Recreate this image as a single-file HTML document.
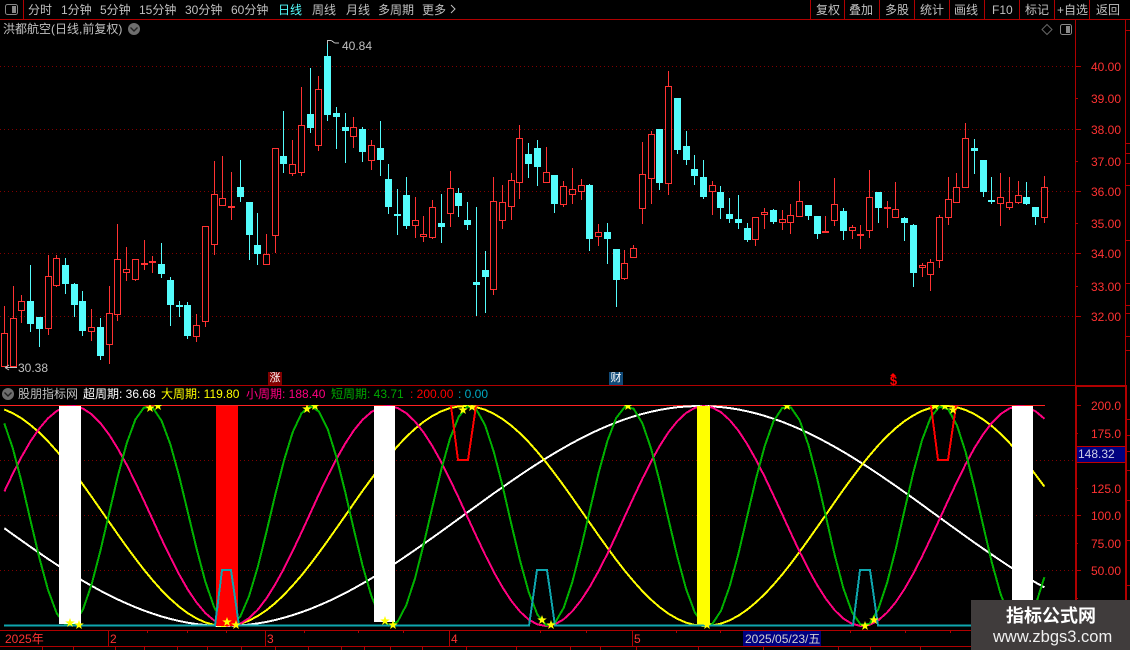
<!DOCTYPE html>
<html lang="zh">
<head>
<meta charset="utf-8">
<title>洪都航空 日线</title>
<style>
html,body{margin:0;padding:0;background:#000;}
#p{position:relative;width:1130px;height:650px;overflow:hidden;background:#000;font-family:"Liberation Sans","Noto Sans CJK SC",sans-serif;font-size:12px;color:#c0c0c0;}
#p svg{position:absolute;left:0;top:0;}
.t{position:absolute;white-space:nowrap;line-height:14px;height:14px;}
.r{color:#ff3232;}
.wm{position:absolute;left:971px;top:600px;width:159px;height:50px;background:#403c3c;}
.mk{position:absolute;text-align:center;color:#fff;font-size:11px;line-height:13px;height:13px;overflow:hidden;}
</style>
</head>
<body>
<div id="p">
<svg id="s" width="1130" height="650" viewBox="0 0 1130 650" xmlns="http://www.w3.org/2000/svg">
<defs><clipPath id="pane"><rect x="0" y="405" width="1075" height="225"/></clipPath></defs>
<g stroke="#b00000" stroke-width="1" shape-rendering="crispEdges" fill="none">
<path d="M0 19.5H1130M0 385.5H1075M0 630.5H1075M0 646.5H1075"/>
<path d="M23.5 0V19M810.5 0V19M844.5 0V19M879.5 0V19M914.5 0V19M949.5 0V19M984.5 0V19M1019.5 0V19M1054.5 0V19M1089.5 0V19"/>
<path d="M1075.5 19V386M1125.5 19V386"/>
<path d="M1075 66.5H1081M1075 98.5H1078M1075 129.5H1081M1075 161.5H1078M1075 191.5H1081M1075 223.5H1078M1075 253.5H1081M1075 286.5H1078M1075 316.5H1081"/>
<path d="M1075 405.5H1081M1075 433.5H1078M1075 488.5H1078M1075 515.5H1081M1075 543.5H1078M1075 570.5H1081M1075 598.5H1078"/>
<path d="M1126 30.5H1130M1126 143.5H1130M1126 153.5H1130M1126 163.5H1130M1126 185.5H1130M1126 240.5H1130M1126 283.5H1130M1126 305.5H1130M1126 313.5H1130M1126 336.5H1130M1126 350.5H1130M1126 419.5H1130M1126 435.5H1130M1126 451.5H1130M1126 470.5H1130M1126 500.5H1130M1126 540.5H1130M1126 585.5H1130"/>
<path d="M108.5 630V646M265.5 630V646M449.5 630V646M632.5 630V646"/>
<path d="M147.5 630V633M187.5 630V633M226.5 630V633M304.5 630V633M358.5 630V633M403.5 630V633M540.5 630V633M586.5 630V633M676.5 630V633M720.5 630V633M770.5 630V633M850.5 630V633M905.5 630V633M950.5 630V633"/>
<path d="M42.5 646V650M73.5 646V650M115.5 646V650M144.5 646V650M177.5 646V650M207.5 646V650M241.5 646V650M275.5 646V650M308.5 646V650M341.5 646V650M364.5 646V650M390.5 646V650M422.5 646V650M466.5 646V650M516.5 646V650M570.5 646V650M600.5 646V650M636.5 646V650M698.5 646V650M763.5 646V650M838.5 646V650M870.5 646V650M920.5 646V650"/>
</g>
<path d="M1075 385V647M1076 385V647M1125 385V600M1126 385V600" stroke="#b00000" stroke-width="1" shape-rendering="crispEdges" transform="translate(.5 0)"/>
<path d="M1075 386H1127" stroke="#b00000" stroke-width="2" shape-rendering="crispEdges"/>
<g stroke="#800000" stroke-width="1" stroke-dasharray="1 3" shape-rendering="crispEdges">
<path d="M0 66.5H1075M0 129.5H1075M0 191.5H1075M0 253.5H1075M0 316.5H1075M0 460.5H1075M0 515.5H1075M0 570.5H1075"/>
</g>
<g id="candles" shape-rendering="crispEdges"></g>
<path d="M0 405.5H1045" stroke="#ff2020" stroke-width="1" shape-rendering="crispEdges"/>
<g id="curves" fill="none" stroke-width="2" shape-rendering="crispEdges" clip-path="url(#pane)"></g>
<g shape-rendering="crispEdges">
<rect x="59" y="406" width="22" height="218" fill="#fff"/>
<rect x="216" y="406" width="22" height="220" fill="#f00"/>
<rect x="374" y="406" width="21" height="216" fill="#fff"/>
<rect x="697" y="406" width="13" height="219" fill="#ff0"/>
<rect x="1012" y="406" width="21" height="218" fill="#fff"/>
</g>
<g fill="none" stroke-width="2" shape-rendering="crispEdges">
<path d="M4 625.7H215L222 570H231L239 625.7H529L537 570H547L555 625.7H853L860 570H870L878 625.7H1045" stroke="#0ea6ae"/>
<path d="M451 406L458 460H468L476 406M931 406L938 460H948L956 406" stroke="#f00"/>
</g>
<g id="stars" fill="#ff0" clip-path="url(#pane)"></g>
<g fill="none" stroke="#c0c0c0" stroke-width="1">
<path d="M327.5 40V44M327.5 40.5H331L335 43H339" shape-rendering="crispEdges"/>
<path d="M5 367.5H17M5 367.5L9 365M5 367.5L9 370"/>
</g>
<g>
<circle cx="134" cy="29" r="6" fill="#6e6e6e"/>
<path d="M130.5 27.5L134 31L137.5 27.5" fill="none" stroke="#222" stroke-width="1.4"/>
<circle cx="8" cy="394" r="6" fill="#6e6e6e"/>
<path d="M4.5 392.5L8 396L11.5 392.5" fill="none" stroke="#222" stroke-width="1.4"/>
<path d="M1047 24.5L1052 29.5L1047 34.5L1042 29.5Z" fill="none" stroke="#666" stroke-width="1"/>
<rect x="1060.5" y="24.5" width="11" height="10" rx="2" fill="none" stroke="#888"/>
<rect x="1066" y="26" width="4" height="7" fill="#888"/>
<rect x="5.5" y="4.5" width="12" height="10" rx="2" fill="none" stroke="#888"/>
<rect x="12" y="6" width="4" height="7" fill="#888"/>
<path d="M451 5L455 9L451 13" fill="none" stroke="#c0c0c0" stroke-width="1"/>
<path d="M893 373L896 376H890Z" fill="#f00"/>
</g>
</svg>

<span class="t" style="left:28px;top:3px">分时</span>
<span class="t" style="left:61px;top:3px">1分钟</span>
<span class="t" style="left:100px;top:3px">5分钟</span>
<span class="t" style="left:139px;top:3px">15分钟</span>
<span class="t" style="left:185px;top:3px">30分钟</span>
<span class="t" style="left:231px;top:3px">60分钟</span>
<span class="t" style="left:278px;top:3px;color:#54fcfc">日线</span>
<span class="t" style="left:312px;top:3px">周线</span>
<span class="t" style="left:346px;top:3px">月线</span>
<span class="t" style="left:378px;top:3px">多周期</span>
<span class="t" style="left:422px;top:3px">更多</span>

<span class="t" style="left:816px;top:3px">复权</span>
<span class="t" style="left:849px;top:3px">叠加</span>
<span class="t" style="left:885px;top:3px">多股</span>
<span class="t" style="left:920px;top:3px">统计</span>
<span class="t" style="left:954px;top:3px">画线</span>
<span class="t" style="left:992px;top:3px">F10</span>
<span class="t" style="left:1025px;top:3px">标记</span>
<span class="t" style="left:1057px;top:3px">+自选</span>
<span class="t" style="left:1096px;top:3px">返回</span>

<span class="t" style="left:3px;top:22px">洪都航空(日线,前复权)</span>
<span class="t" style="left:342px;top:39px">40.84</span>
<span class="t" style="left:18px;top:361px">30.38</span>

<span class="t r" style="left:1091px;top:60px">40.00</span>
<span class="t r" style="left:1091px;top:92px">39.00</span>
<span class="t r" style="left:1091px;top:123px">38.00</span>
<span class="t r" style="left:1091px;top:155px">37.00</span>
<span class="t r" style="left:1091px;top:185px">36.00</span>
<span class="t r" style="left:1091px;top:217px">35.00</span>
<span class="t r" style="left:1091px;top:247px">34.00</span>
<span class="t r" style="left:1091px;top:280px">33.00</span>
<span class="t r" style="left:1091px;top:310px">32.00</span>

<span class="mk" style="left:268px;top:372px;width:14px;background:#800000">涨</span>
<span class="mk" style="left:609px;top:372px;width:14px;background:#104a78">财</span>
<span class="mk" style="left:887px;top:374px;width:13px;color:#f00;font-weight:bold;font-size:13px">$</span>

<span class="t" style="left:18px;top:387px">股朋指标网</span>
<span class="t" style="left:83px;top:387px;color:#fff">超周期: 36.68</span>
<span class="t" style="left:161px;top:387px;color:#ff0">大周期: 119.80</span>
<span class="t" style="left:246px;top:387px;color:#ff0080">小周期: 188.40</span>
<span class="t" style="left:331px;top:387px;color:#00a800">短周期: 43.71</span>
<span class="t" style="left:410px;top:387px;color:#f00">: 200.00</span>
<span class="t" style="left:458px;top:387px;color:#00a8c0">: 0.00</span>

<span class="t r" style="left:1091px;top:399px">200.0</span>
<span class="t r" style="left:1091px;top:427px">175.0</span>
<span class="t r" style="left:1091px;top:482px">125.0</span>
<span class="t r" style="left:1091px;top:509px">100.0</span>
<span class="t r" style="left:1091px;top:537px">75.00</span>
<span class="t r" style="left:1091px;top:564px">50.00</span>
<div style="position:absolute;left:1077px;top:446px;width:48px;height:15px;background:#000080;border-top:1px solid #c00000;border-bottom:1px solid #c00000"></div>
<span class="t" style="left:1078px;top:447px;color:#d0d0e8">148.32</span>

<span class="t r" style="left:5px;top:632px">2025年</span>
<span class="t r" style="left:110px;top:632px">2</span>
<span class="t r" style="left:267px;top:632px">3</span>
<span class="t r" style="left:451px;top:632px">4</span>
<span class="t r" style="left:634px;top:632px">5</span>
<div style="position:absolute;left:743px;top:631px;width:78px;height:15px;background:#000080"></div>
<span class="t" style="left:745px;top:632px;color:#d0d0d0">2025/05/23/五</span>

<div class="wm"></div>
<span class="t" style="left:1006px;top:606px;font-size:18px;line-height:20px;height:20px;font-weight:bold;color:#fff;font-family:'Liberation Sans','Noto Sans CJK SC',sans-serif">指标公式网</span>
<span class="t" style="left:993px;top:628px;font-size:16.5px;line-height:18px;height:18px;color:#f0f0f0">www.zbgs3.com</span>
</div>

<script>
var D=[[0,306,333,367,367],[0,286,318,367,367],[0,295,301,311,323],[1,265,301,324,332],[1,317,317,329,347],[0,255,276,329,335],[0,255,258,286,287],[1,258,265,284,294],[1,283,284,305,317],[1,291,301,331,336],[0,309,327,332,341],[1,318,327,356,360],[0,286,313,345,364],[0,224,259,315,321],[0,247,269,273,281],[0,259,259,280,281],[0,240,263,265,270],[0,256,261,263,273],[1,243,264,274,278],[1,277,280,305,326],[1,301,305,306,317],[1,302,305,336,339],[0,314,325,337,342],[0,226,226,322,327],[0,161,194,245,255],[0,156,198,206,206],[0,172,206,208,220],[1,160,187,197,202],[1,202,202,235,260],[1,213,245,254,265],[0,234,254,265,265],[0,148,148,236,253],[1,111,156,164,173],[0,140,164,174,176],[0,87,125,173,176],[1,68,114,128,133],[0,76,89,146,151],[1,42,56,115,121],[1,107,113,117,149],[1,113,127,131,163],[0,117,127,137,148],[1,127,129,152,162],[0,140,145,161,170],[1,121,148,160,176],[1,164,179,207,214],[1,189,214,216,235],[1,177,195,226,229],[0,197,220,226,238],[0,216,234,237,242],[0,200,207,238,239],[1,194,223,227,243],[0,171,188,214,227],[1,188,193,206,217],[1,202,220,225,230],[1,207,282,285,316],[1,251,270,277,313],[0,177,201,290,295],[0,185,202,221,229],[0,173,180,207,220],[0,125,138,183,199],[1,143,154,164,178],[1,140,148,167,186],[0,147,172,183,183],[1,175,175,204,213],[0,181,186,205,207],[0,168,189,195,204],[0,179,185,192,200],[1,184,185,239,251],[0,224,232,237,246],[1,223,232,239,264],[1,249,249,280,307],[0,250,263,279,280],[0,245,248,258,258],[0,142,174,209,224],[0,131,134,179,204],[1,129,129,183,190],[0,71,86,184,195],[1,98,98,150,154],[1,131,146,160,165],[1,155,169,176,185],[1,160,177,197,199],[0,181,185,192,215],[1,186,192,208,219],[1,198,214,219,223],[1,195,219,223,229],[1,223,228,240,242],[0,217,217,240,246],[0,208,212,215,229],[1,209,210,222,224],[0,210,219,223,230],[0,204,215,223,234],[0,181,201,217,217],[1,205,205,216,220],[1,216,216,234,239],[0,216,231,233,233],[0,178,204,221,226],[1,208,211,231,240],[0,225,227,231,239],[0,225,234,236,249],[0,170,197,231,238],[1,192,192,208,223],[0,201,207,209,228],[0,182,209,218,218],[1,217,218,223,241],[1,224,225,273,287],[0,263,265,268,277],[0,259,262,275,291],[0,215,217,261,268],[0,177,199,218,225],[0,173,187,203,203],[0,123,138,188,188],[1,139,148,151,174],[1,160,160,192,197],[1,177,200,201,204],[0,173,197,204,226],[0,177,202,208,210],[0,181,195,203,204],[1,182,197,204,205],[1,207,207,217,225],[0,176,187,218,223]];
var NS="http://www.w3.org/2000/svg";
function el(n,a,par){var e=document.createElementNS(NS,n);for(var k in a)e.setAttribute(k,a[k]);par.appendChild(e);return e;}
var C=document.getElementById("candles");
var RED="#ff3232",CY="#54fcfc";
D.forEach(function(d,i){
  var cx=Math.floor(4.3+8.74*i),col=d[0]?CY:RED;
  el("rect",{x:cx,y:d[1],width:1,height:Math.max(d[4]-d[1],1),fill:col},C);
  if(d[0]||d[3]-d[2]<=2){
    el("rect",{x:cx-3,y:d[2],width:7,height:Math.max(d[3]-d[2],2),fill:col},C);
  }else{
    el("rect",{x:cx-2.5,y:d[2]+.5,width:6,height:d[3]-d[2]-1,fill:"#000",stroke:col,"stroke-width":1},C);
  }
});
var G=document.getElementById("curves");
function curve(col,f){
  var pts=[];
  for(var i=0;i<120;i++){
    var x=4.3+8.74*i;
    var y=516-110*Math.cos(f(x));
    pts.push(x.toFixed(1)+","+y.toFixed(1));
  }
  el("polyline",{points:pts.join(" "),stroke:col},G);
}
function lin(x0,hp){return function(x){return Math.PI*(x-x0)/hp;};}
var GP=[-10,148,311,470,628,787,942,1098];
function greenPhase(x){
  var k=0;
  while(k<GP.length-2&&x>=GP[k+1])k++;
  return 2*Math.PI*(k+(x-GP[k])/(GP[k+1]-GP[k]));
}
curve("#ffffff",lin(700,475));
curve("#ffff00",lin(465,240));
curve("#ff0080",lin(72,158));
curve("#00b000",greenPhase);
var S=document.getElementById("stars");
[[150,408],[158,406],[307,409],[315,406],[463,410],[472,407],[628,406],[787,406],[935,406],[945,406],[953,410],[70,623],[79,625],[227,622],[236,625],[385,621],[393,625],[542,620],[551,625],[707,625],[865,626],[874,620]].forEach(function(p){
  var a=[];
  for(var k=0;k<10;k++){
    var r=k%2?2:5,t=-Math.PI/2+k*Math.PI/5;
    a.push((p[0]+r*Math.cos(t)).toFixed(1)+","+(p[1]+r*Math.sin(t)).toFixed(1));
  }
  el("polygon",{points:a.join(" ")},S);
});
</script>
</body>
</html>
